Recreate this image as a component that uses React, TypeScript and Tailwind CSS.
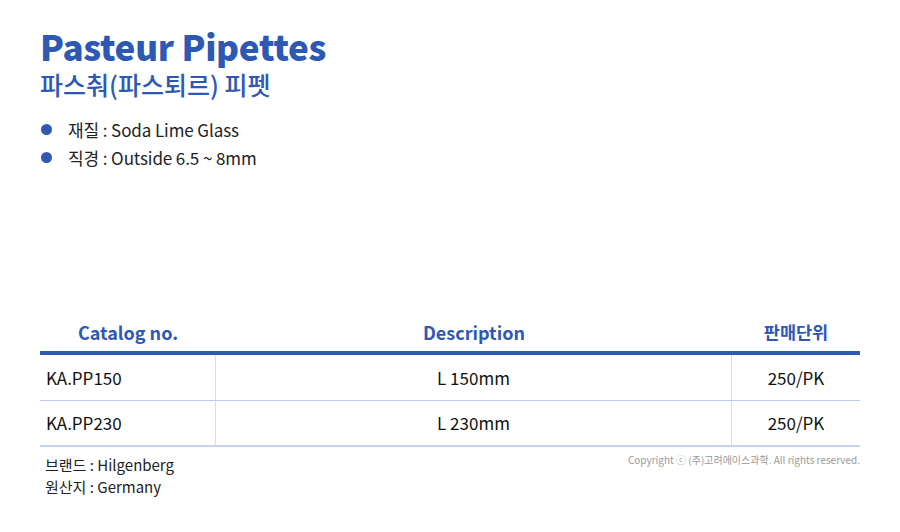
import React from "react";

const F = { fontFamily: '"Noto Sans CJK KR", "Noto Sans", sans-serif' };

export default function App() {
  const rows = [
    ["KA.PP150", "L 150mm", "250/PK"],
    ["KA.PP230", "L 230mm", "250/PK"],
  ];
  return (
    <div className="w-[900px] h-[532px] bg-white relative overflow-hidden" style={F}>
      <div className="pl-10 pr-10 pt-[24px]">
        <h1 className="text-[35px] leading-[44px] font-black text-[#2d58b4] tracking-[-0.3px]">Pasteur Pipettes</h1>
        <div className="text-[25px] leading-[30px] font-medium text-[#2d58b4] mt-[1px]">파스춰(파스퇴르) 피펫</div>
        <ul className="mt-[18px] flex flex-col gap-[3px]">
          <li className="flex items-center text-[17px] leading-[25px] text-[#222] tracking-[-0.1px]">
            <span className="w-[11px] h-[11px] rounded-full bg-[#3059b5] mr-[16px] ml-[1px]"></span>
            재질 : Soda Lime Glass
          </li>
          <li className="flex items-center text-[17px] leading-[25px] text-[#222] tracking-[-0.1px]">
            <span className="w-[11px] h-[11px] rounded-full bg-[#3059b5] mr-[16px] ml-[1px]"></span>
            직경 : Outside 6.5 ~ 8mm
          </li>
        </ul>
      </div>
      <div className="absolute left-10 top-[314px] w-[820px]">
        <div className="grid grid-cols-[176px_516px_128px] border-b-[4px] border-[#2d58b4] h-[41px]">
          <div className="text-center text-[18px] font-bold text-[#2d58b4] leading-[36px]">Catalog no.</div>
          <div className="text-center text-[18px] font-bold text-[#2d58b4] leading-[36px]">Description</div>
          <div className="text-center text-[17.5px] font-bold text-[#2d58b4] leading-[36px]">판매단위</div>
        </div>
        {rows.map((r, i) => (
          <div
            key={i}
            className={
              "grid grid-cols-[176px_516px_128px] h-[46px] " +
              (i === rows.length - 1 ? "border-b-[2px] border-[#c3d5ef]" : "border-b border-[#b9cfec]")
            }
          >
            <div className="pl-[6px] flex items-center text-[17px] text-[#111] border-r border-[#cfdff3]">{r[0]}</div>
            <div className="flex items-center justify-center text-[17px] text-[#111] border-r border-[#cfdff3]">{r[1]}</div>
            <div className="flex items-center justify-center text-[17px] text-[#111]">{r[2]}</div>
          </div>
        ))}
        <div className="flex justify-between mt-[7px]">
          <div className="pl-[5px] text-[15px] leading-[22px] text-[#222]">
            <div>브랜드 : Hilgenberg</div>
            <div>원산지 : Germany</div>
          </div>
          <div className="text-[10px] text-[#999] leading-[14px] -mt-[1px]">Copyright ⓒ (주)고려에이스과학. All rights reserved.</div>
        </div>
      </div>
    </div>
  );
}
